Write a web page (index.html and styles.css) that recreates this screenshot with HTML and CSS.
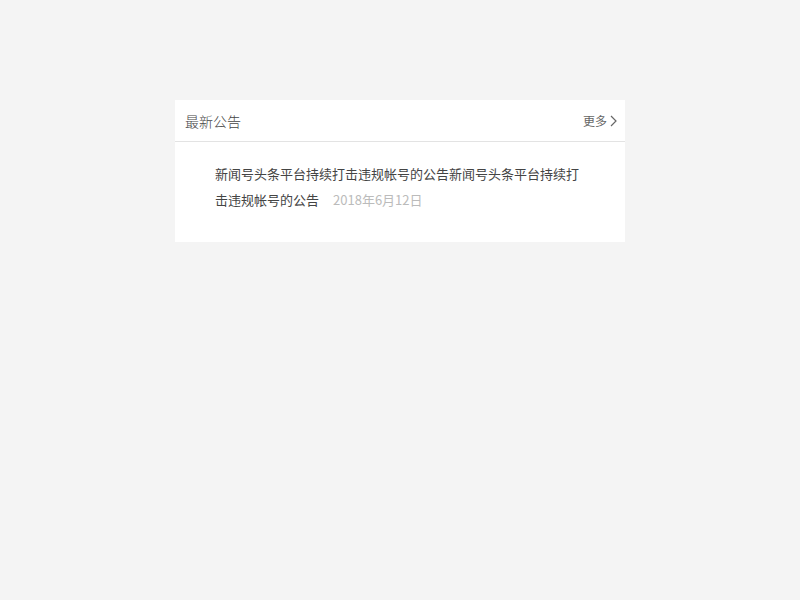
FILE: index.html
```html
<!DOCTYPE html>
<html lang="zh-CN">
<head>
<meta charset="utf-8">
<title>最新公告</title>
<link rel="stylesheet" href="styles.css">
</head>
<body>
<div class="page">
  <section class="notice-card">
    <header class="notice-head">
      <h2 class="notice-title">最新公告</h2>
      <a class="more" href="#">更多<svg class="chev" width="7" height="12" viewBox="0 0 7 12"><path d="M1 1 L6 6 L1 11" fill="none" stroke="#666" stroke-width="1.2"/></svg></a>
    </header>
    <div class="notice-body">
      <p class="notice-text">新闻号头条平台持续打击违规帐号的公告新闻号头条平台持续打击违规帐号的公告<span class="date">2018年6月12日</span></p>
    </div>
  </section>
</div>
</body>
</html>
```

FILE: styles.css
```css
html, body {
  margin: 0;
  padding: 0;
  background: #f4f4f4;
  font-family: "Microsoft YaHei", "Noto Sans CJK SC", "Liberation Sans", sans-serif;
}
.page {
  padding-top: 100px;
  display: flex;
  justify-content: center;
}
.notice-card {
  width: 450px;
  background: #fff;
}
.notice-head {
  height: 41px;
  border-bottom: 1px solid #e3e3e3;
  display: flex;
  align-items: center;
  justify-content: space-between;
  padding: 0 8px 0 10px;
}
.notice-title {
  margin: 0;
  font-size: 14px;
  font-weight: 300;
  color: #444;
}
.more {
  display: flex;
  align-items: center;
  gap: 3px;
  font-size: 12px;
  color: #666;
  text-decoration: none;
}
.chev { display: block; }
.notice-body {
  padding: 19px 40px 29px;
}
.notice-text {
  margin: 0;
  font-size: 13px;
  line-height: 26px;
  color: #444;
}
.date {
  display: inline-block;
  margin-left: 14px;
  color: #bbb;
}
```
